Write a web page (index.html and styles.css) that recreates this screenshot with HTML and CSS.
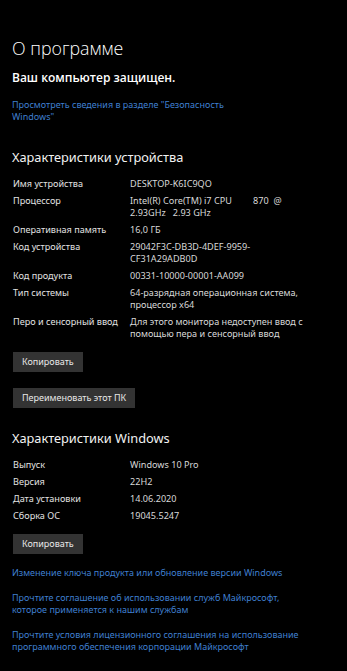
FILE: index.html
```html
<!DOCTYPE html>
<html lang="ru">
<head>
<meta charset="utf-8">
<link rel="stylesheet" href="styles.css">
</head>
<body>
<main class="page">
  <h1 class="title">О программе</h1>
  <p class="protected">Ваш компьютер защищен.</p>
  <a class="link link-security">Просмотреть сведения в разделе "Безопасность Windows"</a>

  <h2 class="heading heading-device">Характеристики устройства</h2>
  <div class="specs">
    <div class="row"><span class="label">Имя устройства</span><span class="value">DESKTOP-K6IC9QO</span></div>
    <div class="row"><span class="label">Процессор</span><span class="value pre">Intel(R) Core(TM) i7 CPU         870  @ 2.93GHz   2.93 GHz</span></div>
    <div class="row"><span class="label">Оперативная память</span><span class="value">16,0 ГБ</span></div>
    <div class="row"><span class="label">Код устройства</span><span class="value">29042F3C-DB3D-4DEF-9959-CF31A29ADB0D</span></div>
    <div class="row"><span class="label">Код продукта</span><span class="value">00331-10000-00001-AA099</span></div>
    <div class="row"><span class="label">Тип системы</span><span class="value">64-разрядная операционная система, процессор x64</span></div>
    <div class="row"><span class="label">Перо и сенсорный ввод</span><span class="value">Для этого монитора недоступен ввод с помощью пера и сенсорный ввод</span></div>
  </div>
  <button class="btn btn-copy">Копировать</button>
  <button class="btn btn-rename">Переименовать этот ПК</button>

  <h2 class="heading heading-windows">Характеристики Windows</h2>
  <div class="specs">
    <div class="row"><span class="label">Выпуск</span><span class="value">Windows 10 Pro</span></div>
    <div class="row"><span class="label">Версия</span><span class="value">22H2</span></div>
    <div class="row"><span class="label">Дата установки</span><span class="value">14.06.2020</span></div>
    <div class="row"><span class="label">Сборка ОС</span><span class="value">19045.5247</span></div>
  </div>
  <button class="btn btn-copy">Копировать</button>

  <div class="links">
    <a class="link">Изменение ключа продукта или обновление версии Windows</a>
    <a class="link">Прочтите соглашение об использовании служб Майкрософт, которое применяется к нашим службам</a>
    <a class="link">Прочтите условия лицензионного соглашения на использование программного обеспечения корпорации Майкрософт</a>
  </div>
</main>
</body>
</html>
```
FILE: styles.css
```css
html, body {
  margin: 0;
  padding: 0;
  background: #000;
}
body {
  font-family: "Noto Sans", "Open Sans", sans-serif;
  color: #e6e6e6;
  width: 347px;
  height: 671px;
  overflow: hidden;
}
.page {
  display: flex;
  flex-direction: column;
  align-items: flex-start;
  padding: 36px 0 0 12px;
}
.title {
  margin: 0;
  font-family: "Open Sans", "Noto Sans", sans-serif;
  font-weight: 300;
  font-size: 17.8px;
  line-height: 24px;
  color: #fff;
}
.protected {
  margin: 10px 0 0;
  font-family: "Open Sans", "Noto Sans", sans-serif;
  font-size: 12px;
  font-weight: 600;
  line-height: 16px;
  color: #fff;
}
.link {
  display: block;
  font-size: 9px;
  line-height: 12px;
  color: #3f7fcf;
  text-decoration: none;
}
.link-security {
  margin-top: 13px;
  max-width: 228px;
}
.heading {
  margin: 0;
  font-weight: 400;
  font-size: 12.8px;
  line-height: 18px;
  color: #f2f2f2;
}
.heading-device { margin-top: 25px; }
.heading-windows { margin-top: 21px; }
.specs {
  display: flex;
  flex-direction: column;
  gap: 5px;
  margin-top: 12px;
  padding-left: 1px;
}
.row {
  display: grid;
  grid-template-columns: 117px 176px;
  font-size: 9.1px;
  line-height: 12px;
}
.label { color: #e2e2e2; }
.value { color: #d8d8d8; }
.pre { white-space: pre-wrap; }
.btn {
  margin: 12px 0 0 1px;
  height: 20px;
  padding: 0 9px;
  border: none;
  background: #333;
  color: #e8e8e8;
  font-family: "Noto Sans", "Open Sans", sans-serif;
  font-size: 9px;
  line-height: 20px;
}
.btn-rename { margin-top: 16px; }
.links {
  display: flex;
  flex-direction: column;
  gap: 13px;
  margin-top: 13px;
  max-width: 300px;
}
```
